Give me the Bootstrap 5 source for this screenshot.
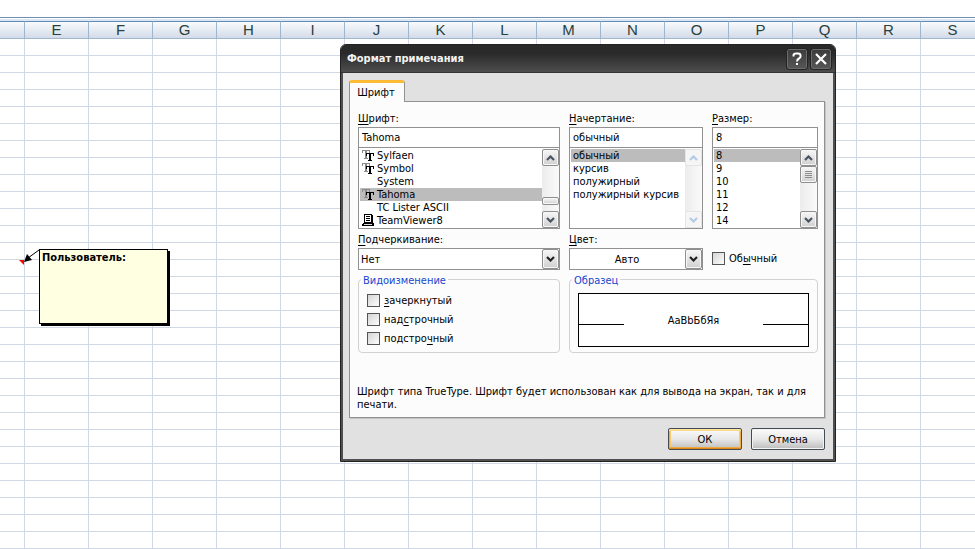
<!DOCTYPE html>
<html lang="ru">
<head>
<meta charset="utf-8">
<meta name="viewport" content="width=device-width, initial-scale=1">
<title>Формат примечания</title>
<link href="https://cdn.jsdelivr.net/npm/bootstrap@5.3.0/dist/css/bootstrap.min.css" rel="stylesheet">
<style>
body{font:11px/13px "DejaVu Sans Condensed","DejaVu Sans",sans-serif;color:#000;background:#fff;overflow:hidden}
.sheet-edge{margin-top:17px;height:4px;border-top:1px solid #6f90b3;background:linear-gradient(#fff 1px,#dbe7f5 1px)}
.sheet{table-layout:fixed;width:985px;border-collapse:separate;border-spacing:0}
.sheet th{height:18px;padding:0;border-top:1px solid #6289b3;border-right:1px solid #9eb6ce;border-bottom:1px solid #9eb6ce;background:linear-gradient(#f9fbfc,#d3dbe9);font:15px/16px "Liberation Sans",Arial,sans-serif;text-align:center;color:#27413e;width:64px}
.sheet th:first-child{width:25px}
.sheet td{height:17px;padding:0;border-right:1px solid #d0d7e5;border-bottom:1px solid #d0d7e5}
.note-box{left:39px;top:249px;width:129px;height:75px;border:1px solid #000;background:#ffffe1;box-shadow:2px 2px #000;padding:1px 2px}
.note-arrow{left:18px;top:246px}
.dlg{left:340px;top:44px;width:496px;background:#e1e1e1;border:1px solid #222;border-radius:6px 6px 0 0;box-shadow:inset 0 0 0 2px #505050;padding:0 2px 2px}
.dlg-title{margin:0 -2px;height:28px;padding:0 4px 0 6px;border-radius:5px 5px 0 0;background:linear-gradient(#2a2a2a,#292929 30%,#4d4d4d);color:#f2f2f2;border-bottom:1px solid #333}
.cap-btn{width:20px;height:20px;padding:0;border:1px solid #6b6b6b;border-radius:2px;background:linear-gradient(#3d3d3d,#555);line-height:0;outline:1px solid #242424}
.dlg-body{padding:7px 8px 8px 6px}
.tab-btn{height:22px;width:56px;padding:0 2px 0 0;border:1px solid #919191;border-top:3px solid #ffbb33;border-bottom:0;border-radius:3px 3px 0 0;background:#fcfcfc;margin-bottom:-1px;z-index:1;color:#000}
.pane{border:1px solid #919191;background:#fcfcfc;padding:10px 6px 6px 8px;box-shadow:1px 1px #c4c4c4}
.cols{display:grid;grid-template-columns:202fr 134fr 106fr;column-gap:9px}
.wide{grid-column:span 2}
.cols label{display:block}
u{text-underline-offset:2px}
.field{display:block;width:100%;height:21px;border:1px solid #919191;background:#fff;padding:0 3px;border-radius:0;color:#000}
select.field{height:22px;appearance:none;padding:0 20px 0 2px}
.caption{height:15px}
.lst{height:82px;border:1px solid #919191;background:#fff;padding:1px;margin-top:-1px}
.lst ul{margin:0;padding:0;list-style:none;flex:1 1 0;min-width:0}
.lst li{height:13px;padding-left:2px;white-space:nowrap}
.lst.fonts li{padding-left:1px;display:flex;gap:2px}
.fonts li svg,.fonts li i{width:14px;height:13px;flex:none}
.lst .on{background:#bcbcbc}
.sbar{width:17px;background:linear-gradient(90deg,#ececec,#fafafa);margin-right:-1px;margin-bottom:-1px}
.sbtn{display:block;width:17px;height:17px;padding:0;border:1px solid #8f8f8f;border-radius:2px;background:linear-gradient(#f7f7f7,#e4e4e4 50%,#d0d0d0);line-height:0;box-shadow:inset 0 0 0 1px #f7f7f7;color:#4b5365}
.sbtn svg{display:block;margin:auto}
.sbtn:disabled{border-color:#e3e3e3;background:#f5f5f5;color:#b3cbe6}
.thumb{height:8px;margin-top:31px}
.drop{right:1px;top:1px;height:20px;pointer-events:none;color:#222}
.groups{margin-top:9px}
.group{border:1px solid #d2d2d2;border-radius:4px;height:74px}
.group legend{float:none;width:auto;position:absolute;left:2px;top:-6px;padding:0 2px;margin:0;font-size:11px;line-height:13px;background:#fcfcfc;color:#1646cf}
.checks{padding:12px 8px 0;display:flex;flex-direction:column;gap:3px}
.tick{display:flex!important;align-items:center;gap:4px;height:16px}
.tick input{appearance:none;flex:none;width:13px;height:13px;margin:0;border:1px solid #555;background:linear-gradient(135deg,#d4d4d4,#fdfdfd)}
.sample{margin:13px 8px 0;height:54px;border:1px solid #000;background:#fff}
.sample hr{opacity:1;border-top:1px solid #000;margin:8px 0 0;width:45px}
.hint{margin:32px 0 0 -1px}
.actions{gap:9px;padding:10px 0 1px}
.dlg-btn{width:74px;height:22px;padding:0;border:1px solid #444b55;border-radius:2px;background:linear-gradient(#fbfbfb,#e8e8e8 50%,#bdbdbd);box-shadow:inset 0 0 0 1px #f3f3f3;color:#000}
.dlg-btn.main{box-shadow:inset 0 1px #ffe6a0,inset 0 2px #fad98b,inset 0 -1px #de8718,inset 1px 0 #f1ae42,inset -1px 0 #f1ae42,inset 0 -2px #efa740,inset 2px 0 #f9c974,inset -2px 0 #f9c974}
</style>
<script src="https://cdn.jsdelivr.net/npm/bootstrap@5.3.0/dist/js/bootstrap.bundle.min.js"></script>
</head>
<body class="position-relative">
<svg width="0" height="0" class="position-absolute" aria-hidden="true">
  <symbol id="up" viewBox="0 0 9 6"><path d="M1 5 4.500 1.500 8 5" fill="none" stroke="currentColor" stroke-width="2.200"/></symbol>
  <symbol id="down" viewBox="0 0 9 6"><path d="M1 1 4.500 4.500 8 1" fill="none" stroke="currentColor" stroke-width="2.200"/></symbol>
  <symbol id="tt" viewBox="0 0 14 13"><g shape-rendering="crispEdges"><path d="M1 1h8v3h-1v-2h-2v7h1v1h-4v-1h1v-7h-2v2h-1z" fill="#8a8a8a"/><path d="M5 4h8v3h-1v-2h-2v6h1v1h-4v-1h1v-6h-2v2h-1z" fill="#000"/></g></symbol>
  <symbol id="prn" viewBox="0 0 14 13"><g shape-rendering="crispEdges"><path d="M3.500 .5h7v8h-7z" fill="#fff" stroke="#000"/><path d="M5 2.500h4M5 4.500h4M5 6.500h4" stroke="#000"/><path d="M11 1h1v8h-1z" fill="#000"/><path d="M2 9h10l1 1v2h-12v-2z" fill="#000"/><path d="M3 10h8v1h-8z" fill="#ddd"/></g></symbol>
</svg>

<main>
  <div class="sheet-edge"></div>
  <table class="sheet" aria-label="Лист">
    <thead><tr id="heads"><th></th></tr></thead>
    <tbody id="cells"></tbody>
  </table>
</main>

<svg class="note-arrow position-absolute" width="22" height="20" viewBox="0 0 22 20" aria-hidden="true"><path d="M1 14h5v5z" fill="#f00"/><path d="M21 4 10 12" stroke="#000"/><path d="M6 16 9 8l5 6z"/></svg>
<aside class="note-box position-absolute fw-bold">Пользователь:</aside>

<section class="dlg position-absolute" role="dialog" aria-labelledby="dlgTitle">
  <header class="dlg-title d-flex align-items-center gap-1">
    <span id="dlgTitle" class="fw-bold me-auto">Формат примечания</span>
    <button class="cap-btn" type="button" aria-label="Справка"><svg width="18" height="18" viewBox="0 0 18 18" fill="none" stroke="#fff" stroke-width="2"><path d="M5.500 6.500V5.500Q5.500 3.500 8 3.500H10Q12.500 3.500 12.500 5.500V6.500Q12.500 7.500 11 8.500 9 9.500 9 11.500M9 13v2"/></svg></button>
    <button class="cap-btn" type="button" aria-label="Закрыть"><svg width="18" height="18" viewBox="0 0 18 18" stroke="#fff" stroke-width="2.200"><path d="M4 4 14 14M14 4 4 14"/></svg></button>
  </header>
  <form class="dlg-body d-flex flex-column" onsubmit="return false">
    <button class="tab-btn position-relative" type="button" role="tab" aria-selected="true">Шрифт</button>
    <div class="pane">
      <div class="cols">
        <div>
          <label class="caption" for="fName"><u>Ш</u>рифт:</label>
          <input class="field" id="fName" value="Tahoma">
          <div class="lst fonts d-flex">
            <ul role="listbox" aria-label="Шрифт">
              <li role="option"><svg><use href="#tt"/></svg>Sylfaen</li>
              <li role="option"><svg><use href="#tt"/></svg>Symbol</li>
              <li role="option"><i></i>System</li>
              <li role="option" class="on" aria-selected="true"><svg><use href="#tt"/></svg>Tahoma</li>
              <li role="option"><i></i>TC Lister ASCII</li>
              <li role="option"><svg><use href="#prn"/></svg>TeamViewer8</li>
            </ul>
            <div class="sbar d-flex flex-column">
              <button class="sbtn" type="button" aria-label="Вверх"><svg width="9" height="6"><use href="#up"/></svg></button>
              <span class="sbtn thumb"></span>
              <button class="sbtn mt-auto" type="button" aria-label="Вниз"><svg width="9" height="6"><use href="#down"/></svg></button>
            </div>
          </div>
        </div>
        <div>
          <label class="caption" for="fStyle"><u>Н</u>ачертание:</label>
          <input class="field" id="fStyle" value="обычный">
          <div class="lst d-flex">
            <ul role="listbox" aria-label="Начертание">
              <li role="option" class="on" aria-selected="true">обычный</li>
              <li role="option">курсив</li>
              <li role="option">полужирный</li>
              <li role="option">полужирный курсив</li>
            </ul>
            <div class="sbar d-flex flex-column">
              <button class="sbtn" type="button" disabled aria-label="Вверх"><svg width="9" height="6"><use href="#up"/></svg></button>
              <button class="sbtn mt-auto" type="button" disabled aria-label="Вниз"><svg width="9" height="6"><use href="#down"/></svg></button>
            </div>
          </div>
        </div>
        <div>
          <label class="caption" for="fSize"><u>Р</u>азмер:</label>
          <input class="field" id="fSize" value="8">
          <div class="lst d-flex">
            <ul role="listbox" aria-label="Размер">
              <li role="option" class="on" aria-selected="true">8</li>
              <li role="option">9</li>
              <li role="option">10</li>
              <li role="option">11</li>
              <li role="option">12</li>
              <li role="option">14</li>
            </ul>
            <div class="sbar d-flex flex-column">
              <button class="sbtn" type="button" aria-label="Вверх"><svg width="9" height="6"><use href="#up"/></svg></button>
              <span class="sbtn pt-1"><svg width="7" height="8" viewBox="0 0 7 8" stroke="#8c8c8c" shape-rendering="crispEdges"><path d="M0 .5h7M0 2.500h7M0 4.500h7M0 6.500h7"/></svg></span>
              <button class="sbtn mt-auto" type="button" aria-label="Вниз"><svg width="9" height="6"><use href="#down"/></svg></button>
            </div>
          </div>
        </div>
      </div>

      <div class="cols pt-1">
        <div>
          <label class="caption" for="fLine"><u>П</u>одчеркивание:</label>
          <div class="position-relative">
            <select class="field" id="fLine"><option>Нет</option></select>
            <span class="sbtn drop position-absolute d-flex"><svg width="9" height="6"><use href="#down"/></svg></span>
          </div>
        </div>
        <div>
          <label class="caption" for="fColor"><u>Ц</u>вет:</label>
          <div class="position-relative">
            <select class="field text-center" id="fColor"><option>Авто</option></select>
            <span class="sbtn drop position-absolute d-flex"><svg width="9" height="6"><use href="#down"/></svg></span>
          </div>
        </div>
        <div class="d-flex align-items-end pb-1">
          <label class="tick" for="fNormal"><input type="checkbox" id="fNormal"><span>Об<u>ы</u>чный</span></label>
        </div>
      </div>

      <div class="cols groups">
        <fieldset class="group position-relative">
          <legend>Видоизменение</legend>
          <div class="checks">
            <label class="tick" for="c1"><input type="checkbox" id="c1"><span><u>з</u>ачеркнутый</span></label>
            <label class="tick" for="c2"><input type="checkbox" id="c2"><span>над<u>с</u>трочный</span></label>
            <label class="tick" for="c3"><input type="checkbox" id="c3"><span>подстро<u>ч</u>ный</span></label>
          </div>
        </fieldset>
        <fieldset class="group wide position-relative">
          <legend>Образец</legend>
          <div class="sample d-flex align-items-center justify-content-between"><hr><span>АаВbБбЯя</span><hr></div>
        </fieldset>
      </div>
      <p class="hint">Шрифт типа TrueType. Шрифт будет использован как для вывода на экран, так и для печати.</p>
    </div>
    <div class="actions d-flex justify-content-end">
      <button class="dlg-btn main" type="submit">ОК</button>
      <button class="dlg-btn" type="button">Отмена</button>
    </div>
  </form>
</section>

<script>
const heads = document.getElementById('heads'), cells = document.getElementById('cells');
const letters = [...'EFGHIJKLMNOPQRS'];
heads.insertAdjacentHTML('beforeend', letters.map(l => `<th scope="col">${l}</th>`).join(''));
cells.innerHTML = ('<tr>' + '<td></td>'.repeat(letters.length + 1) + '</tr>').repeat(30);
</script>
</body>
</html>
